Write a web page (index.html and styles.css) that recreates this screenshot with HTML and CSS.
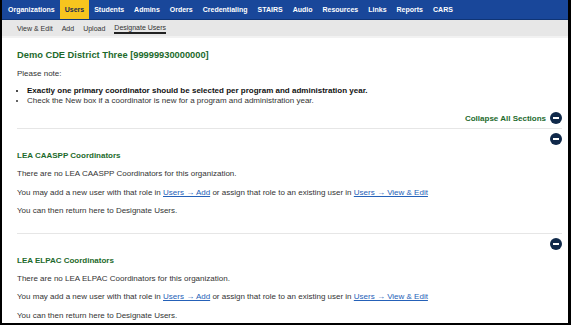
FILE: index.html
```html
<!DOCTYPE html>
<html lang="en">
<head>
    <meta charset="UTF-8">
    <meta name="viewport" content="width=device-width, initial-scale=1.0">
    <title>Designate Users</title>
    <link rel="stylesheet" href="styles.css">
</head>
<body>
    <div id="page">
        <div class="main-nav">
            <a href="#">Organizations</a>
            <a href="#" class="active">Users</a>
            <a href="#">Students</a>
            <a href="#">Admins</a>
            <a href="#">Orders</a>
            <a href="#">Credentialing</a>
            <a href="#">STAIRS</a>
            <a href="#">Audio</a>
            <a href="#">Resources</a>
            <a href="#">Links</a>
            <a href="#">Reports</a>
            <a href="#">CARS</a>
        </div>
        <div class="sub-nav">
            <a href="#">View &amp; Edit</a>
            <a href="#">Add</a>
            <a href="#">Upload</a>
            <a href="#" class="active">Designate Users</a>
        </div>
        <div class="content">
            <h2 class="org-title">Demo CDE District Three [99999930000000]</h2>
            <p class="note">Please note:</p>
            <ul class="notes">
                <li class="strong">Exactly one primary coordinator should be selected per program and administration year.</li>
                <li>Check the New box if a coordinator is new for a program and administration year.</li>
            </ul>
            <div class="collapse-all">
                <span>Collapse All Sections</span>
                <span class="toggle"></span>
            </div>

            <div class="section">
                <div class="section-head"><span class="toggle"></span></div>
                <h3>LEA CAASPP Coordinators</h3>
                <p>There are no LEA CAASPP Coordinators for this organization.</p>
                <p>You may add a new user with that role in <a href="#">Users &rarr; Add</a> or assign that role to an existing user in <a href="#">Users &rarr; View &amp; Edit</a></p>
                <p>You can then return here to Designate Users.</p>
            </div>

            <div class="section">
                <div class="section-head"><span class="toggle"></span></div>
                <h3>LEA ELPAC Coordinators</h3>
                <p>There are no LEA ELPAC Coordinators for this organization.</p>
                <p>You may add a new user with that role in <a href="#">Users &rarr; Add</a> or assign that role to an existing user in <a href="#">Users &rarr; View &amp; Edit</a></p>
                <p>You can then return here to Designate Users.</p>
            </div>
        </div>
    </div>
</body>
</html>
```

FILE: styles.css
```css
* {
    box-sizing: border-box;
}
body {
    margin: 0;
    padding: 0;
    background-color: black;
    font-family: "Liberation Sans", Arial, sans-serif;
}
#page {
    width: 566px;
    height: 323px;
    margin-left: 2px;
    background-color: white;
    overflow: hidden;
}
.main-nav {
    height: 20px;
    background-color: #19479a;
    border-bottom: 1px solid #0f3475;
    display: flex;
    align-items: stretch;
    padding-left: 1px;
}
.main-nav a {
    color: white;
    font-size: 7px;
    font-weight: bold;
    text-decoration: none;
    padding: 0 5px;
    display: flex;
    align-items: center;
}
.main-nav a.active {
    background-color: #f7c51e;
    color: #1b2c4f;
}
.sub-nav {
    height: 18px;
    background-color: #e7e7e7;
    border-bottom: 2px solid #f2f2f2;
    display: flex;
    align-items: center;
    padding-left: 15px;
    gap: 9px;
}
.sub-nav a {
    color: #333;
    font-size: 7px;
    text-decoration: none;
    line-height: 9px;
}
.sub-nav a.active {
    border-bottom: 2px solid #222;
}
.content {
    padding: 12px 6px 0 15px;
    color: #333;
    font-size: 8px;
}
.org-title {
    margin: 0;
    font-size: 9.3px;
    line-height: 10px;
    color: #1d6a2c;
}
.note {
    margin: 9px 0 0 0;
    line-height: 10px;
}
.notes {
    margin: 7px 0 0 0;
    padding-left: 10px;
    line-height: 10px;
}
.notes .strong {
    font-weight: bold;
    color: #111;
}
.collapse-all {
    margin-top: 6px;
    display: flex;
    justify-content: flex-end;
    align-items: center;
    gap: 4px;
    color: #1d6a2c;
    font-weight: bold;
    height: 17px;
    padding-bottom: 4px;
    border-bottom: 1px solid #e6e6e6;
}
.toggle {
    width: 12px;
    height: 12px;
    border-radius: 50%;
    background-color: #10294a;
    display: inline-block;
    position: relative;
}
.toggle::after {
    content: "";
    position: absolute;
    left: 3px;
    top: 5px;
    width: 6px;
    height: 2px;
    background-color: white;
}
.section {
    padding-top: 4px;
    padding-bottom: 12px;
    border-bottom: 1px solid #e6e6e6;
}
.section-head {
    display: flex;
    justify-content: flex-end;
    height: 12px;
}
.section h3 {
    margin: 6px 0 0 0;
    font-size: 8px;
    line-height: 10px;
    color: #1d6a2c;
}
.section p {
    margin: 0;
    line-height: 18.5px;
}
.section h3 + p {
    margin-top: 4px;
}
.section a {
    color: #2561b8;
}
```
